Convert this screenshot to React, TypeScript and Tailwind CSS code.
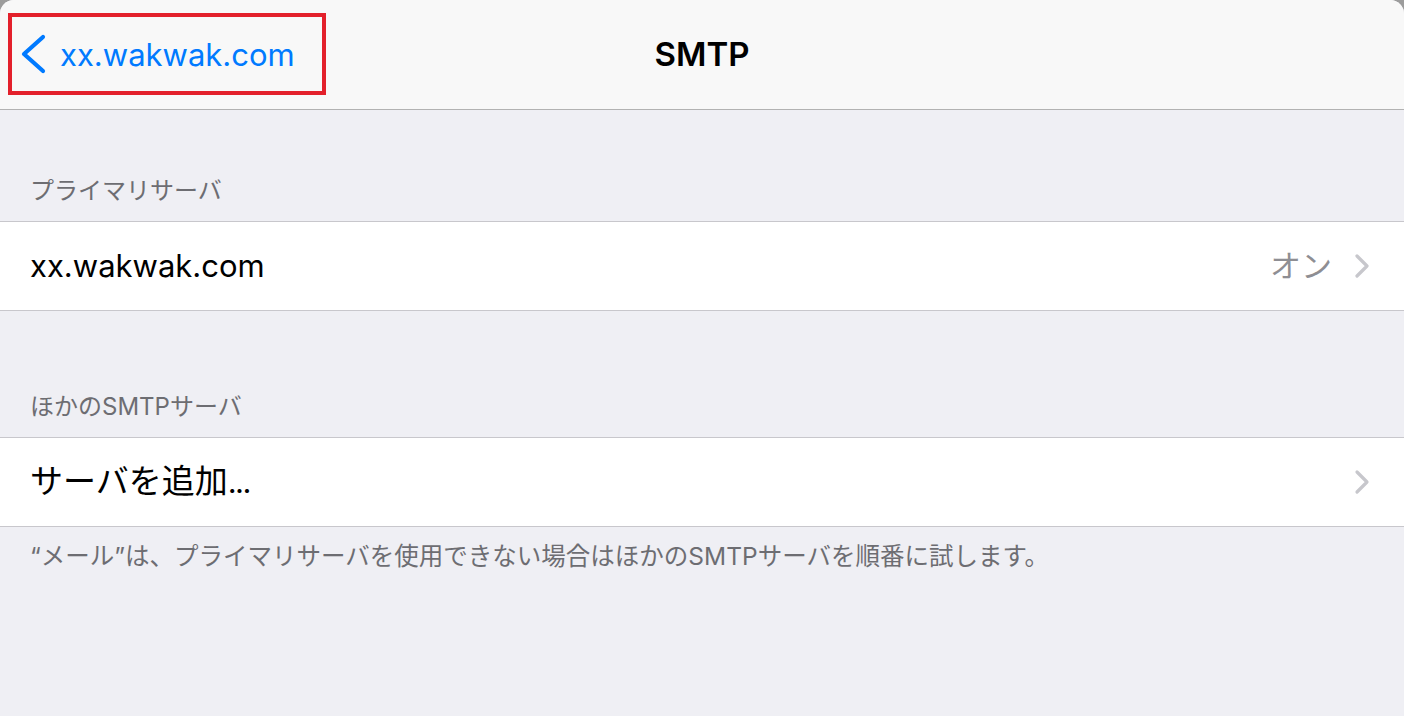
const font = { fontFamily: '"Inter", "Noto Sans CJK JP", sans-serif' };

function SectionHeader({ label, top }: { label: string; top: string }) {
  return (
    <div className={`${top} pb-[15px] pl-[30px] text-[24px] leading-[30px] text-[#6d6d72]`}>{label}</div>
  );
}

function Chevron() {
  return (
    <svg width="16" height="26" viewBox="0 0 16 26" className="text-[#c7c7cc]">
      <path d="M3 3 L13 13 L3 23" fill="none" stroke="currentColor" strokeWidth="3.2" strokeLinecap="round" strokeLinejoin="round" />
    </svg>
  );
}

function Row({ children, value }: { children: React.ReactNode; value?: string }) {
  return (
    <div className="flex h-[90px] items-center border-y border-[#c8c7cc] bg-white pl-[30px] pr-[34px]">
      <span className="flex-1 text-black">{children}</span>
      {value && <span className="mr-[22px] text-[31px] text-[#8e8e93]">{value}</span>}
      <Chevron />
    </div>
  );
}

export default function App() {
  return (
    <div className="h-[716px] w-[1404px] overflow-hidden bg-[#9c9c9c]" style={font}>
      <div className="flex h-full flex-col overflow-hidden rounded-t-[14px] bg-[#efeff4]">
        {/* Nav bar */}
        <div className="relative flex h-[110px] items-center justify-center border-b border-[#b2b2b2] bg-[#f8f8f8]">
          <div className="absolute left-[8px] top-[13px] flex h-[82px] w-[318px] items-center border-[4px] border-[#e3202b] pl-[8px]">
            <svg width="26" height="40" viewBox="0 0 26 40" className="text-[#007aff]">
              <path d="M23 3 L4 20 L23 37" fill="none" stroke="currentColor" strokeWidth="4.2" strokeLinecap="round" strokeLinejoin="round" />
            </svg>
            <span className="ml-[14px] text-[31px] leading-none text-[#007aff]">xx.wakwak.com</span>
          </div>
          <span className="text-[33px] font-semibold text-black">SMTP</span>
        </div>

        <SectionHeader label="プライマリサーバ" top="pt-[66px]" />
        <Row value="オン">
          <span className="text-[31px]">xx.wakwak.com</span>
        </Row>

        <SectionHeader label="ほかのSMTPサーバ" top="pt-[81px]" />
        <Row>
          <span className="text-[33px]">サーバを追加</span>
          <span className="text-[31px] tracking-[-1.5px]">...</span>
        </Row>

        <div className="pl-[30px] pt-[14px] text-[24.5px] leading-[30px] text-[#6d6d72]">
          “メール”は、プライマリサーバを使用できない場合はほかのSMTPサーバを順番に試します。
        </div>
      </div>
    </div>
  );
}
